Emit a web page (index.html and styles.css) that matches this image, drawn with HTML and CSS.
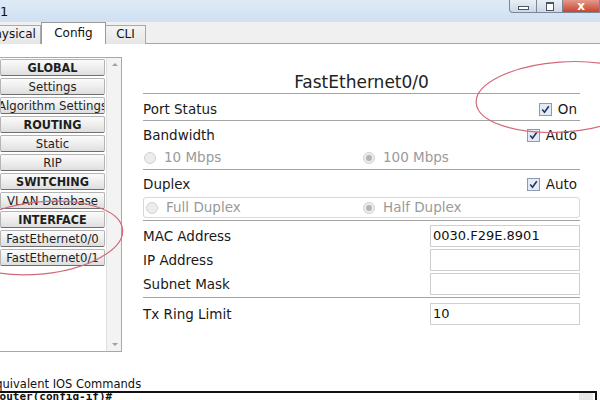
FILE: index.html
```html
<!DOCTYPE html>
<html>
<head>
<meta charset="utf-8">
<link rel="stylesheet" href="styles.css">
</head>
<body>
<div class="window">
  <div class="titlebar">
    <span class="title">R1</span>
    <div class="winbtns">
      <span class="wb wb-min"><span class="glyph-min"></span></span>
      <span class="wb wb-max"><span class="glyph-max"></span></span>
      <span class="wb wb-close">x</span>
    </div>
  </div>
  <div class="tabs">
    <span class="tab tab-first">Physical</span>
    <span class="tab tab-active">Config</span>
    <span class="tab">CLI</span>
  </div>
  <div class="main">
    <div class="listbox">
      <div class="items">
        <div class="item head">GLOBAL</div>
        <div class="item">Settings</div>
        <div class="item">Algorithm Settings</div>
        <div class="item head">ROUTING</div>
        <div class="item">Static</div>
        <div class="item">RIP</div>
        <div class="item head">SWITCHING</div>
        <div class="item">VLAN Database</div>
        <div class="item head">INTERFACE</div>
        <div class="item">FastEthernet0/0</div>
        <div class="item">FastEthernet0/1</div>
      </div>
      <div class="scrollbar">
        <span class="arrow arrow-up"></span>
        <span class="arrow arrow-down"></span>
      </div>
    </div>
    <div class="panel">
      <div class="ptitle">FastEthernet0/0</div>
      <div class="sec sec-port">
        <div class="line">
          <span class="lbl">Port Status</span>
          <span class="chk"><svg class="cb" viewBox="0 0 13 13"><rect x="0.5" y="0.5" width="12" height="12" fill="#e4ebf5" stroke="#8a9ab5"/><path d="M3.2 6.6 L5.5 9.3 L9.8 3.2" fill="none" stroke="#23356b" stroke-width="1.6"/></svg>On</span>
        </div>
      </div>
      <div class="sec sec-bw">
        <div class="line">
          <span class="lbl">Bandwidth</span>
          <span class="chk"><svg class="cb" viewBox="0 0 13 13"><rect x="0.5" y="0.5" width="12" height="12" fill="#e4ebf5" stroke="#8a9ab5"/><path d="M3.2 6.6 L5.5 9.3 L9.8 3.2" fill="none" stroke="#23356b" stroke-width="1.6"/></svg>Auto</span>
        </div>
        <div class="radios">
          <span class="rad"><span class="rb"></span>10 Mbps</span>
          <span class="rad"><span class="rb rb-on"></span>100 Mbps</span>
        </div>
      </div>
      <div class="sec sec-dup">
        <div class="line">
          <span class="lbl">Duplex</span>
          <span class="chk"><svg class="cb" viewBox="0 0 13 13"><rect x="0.5" y="0.5" width="12" height="12" fill="#e4ebf5" stroke="#8a9ab5"/><path d="M3.2 6.6 L5.5 9.3 L9.8 3.2" fill="none" stroke="#23356b" stroke-width="1.6"/></svg>Auto</span>
        </div>
        <div class="radios box">
          <span class="rad"><span class="rb"></span>Full Duplex</span>
          <span class="rad"><span class="rb rb-on"></span>Half Duplex</span>
        </div>
      </div>
      <div class="sec sec-addr">
        <div class="frow"><span class="lbl">MAC Address</span><span class="inp">0030.F29E.8901</span></div>
        <div class="frow"><span class="lbl">IP Address</span><span class="inp"></span></div>
        <div class="frow"><span class="lbl">Subnet Mask</span><span class="inp"></span></div>
      </div>
      <div class="sec sec-tx">
        <div class="frow"><span class="lbl">Tx Ring Limit</span><span class="inp">10</span></div>
      </div>
    </div>
  </div>
  <div class="ios">Equivalent IOS Commands</div>
  <div class="cli"><span class="cli-text">Router(config-if)#</span><span class="cli-scroll"></span></div>
  <svg class="annot" viewBox="0 0 600 400" width="600" height="400">
    <ellipse cx="562" cy="97" rx="86" ry="35" transform="rotate(-4 562 97)" fill="none" stroke="#d2697a" stroke-width="1.2"/>
    <ellipse cx="40" cy="238" rx="83" ry="36" transform="rotate(-6 40 238)" fill="none" stroke="#d2697a" stroke-width="1.2"/>
  </svg>
</div>
</body>
</html>
```

FILE: styles.css
```css
html, body {
  margin: 0;
  padding: 0;
}
body {
  width: 600px;
  height: 400px;
  overflow: hidden;
  background: #fff;
  font-family: "DejaVu Sans", sans-serif;
  color: #1a1a1a;
}
.window {
  position: relative;
  width: 600px;
  height: 400px;
  overflow: hidden;
  display: flex;
  flex-direction: column;
}
.titlebar {
  height: 22px;
  flex: none;
  display: flex;
  align-items: flex-start;
  background: linear-gradient(to bottom, #dfeaf6 0%, #cfe0f2 100%);
}
.title {
  margin-left: -9px;
  margin-top: 4px;
  font-size: 13px;
  line-height: 15px;
  color: #111;
}
.winbtns {
  margin-left: auto;
  display: flex;
  height: 13px;
}
.wb {
  display: flex;
  align-items: center;
  justify-content: center;
  height: 12px;
  border: 1px solid #7b8796;
  border-top: none;
  background: linear-gradient(to bottom, #e9eff6, #ccd8e6);
  box-sizing: content-box;
}
.wb-min {
  width: 26px;
  border-radius: 0 0 0 4px;
}
.wb-max {
  width: 25px;
  border-left: none;
}
.wb-close {
  width: 36px;
  border-left: none;
  background: linear-gradient(to bottom, #e49a8c, #c8442e);
  color: #fff;
  font-weight: bold;
  font-size: 12px;
  line-height: 12px;
}
.glyph-min {
  width: 9px;
  height: 2px;
  border: 1px solid #4a5566;
  background: #fff;
  margin-top: 3px;
}
.glyph-max {
  width: 6px;
  height: 6px;
  border: 1px solid #4a5566;
  border-top-width: 2px;
  background: #fff;
}
.tabs {
  height: 22px;
  flex: none;
  display: flex;
  align-items: flex-end;
  background: #f0f0f0;
  border-bottom: 1px solid #a5a5a5;
  box-sizing: border-box;
}
.tab {
  box-sizing: border-box;
  border: 1px solid #a9a9a9;
  border-bottom: none;
  background: linear-gradient(to bottom, #f4f4f4, #e6e6e6);
  font-size: 12px;
  line-height: 17px;
  padding: 0 8px;
  color: #111;
  margin-bottom: -1px;
  height: 19px;
}
.tab-first {
  margin-left: -22px;
  width: 63px;
  text-align: center;
}
.tab-active {
  height: 22px;
  width: 65px;
  background: #fff;
  line-height: 20px;
  text-align: center;
  border-color: #9a9a9a;
}
.tab:last-child {
  width: 40px;
  text-align: center;
  border-left: none;
}
.main {
  flex: none;
  display: flex;
  margin-top: 13px;
}
.listbox {
  width: 123px;
  height: 295px;
  margin-left: -1px;
  box-sizing: border-box;
  border: 1px solid #a8a8a8;
  display: flex;
  flex: none;
}
.items {
  width: 105px;
  padding-top: 1px;
  display: flex;
  flex-direction: column;
  gap: 2px;
}
.item {
  height: 17px;
  box-sizing: border-box;
  display: flex;
  align-items: center;
  justify-content: center;
  white-space: nowrap;
  overflow: hidden;
  border: 1px solid #b4b4b4;
  border-bottom-color: #6e6e6e;
  border-radius: 2px;
  background: linear-gradient(to bottom, #fbfbfb 0%, #eeeeee 50%, #dedede 100%);
  font-family: "DejaVu Sans Condensed", "DejaVu Sans", sans-serif;
  font-size: 13px;
  color: #1e1e1e;
}
.item.head {
  font-weight: bold;
  font-size: 12.5px;
}
.scrollbar {
  flex: 1;
  margin-left: 1px;
  background: #f3f3f3;
  border-left: 1px solid #e0e0e0;
  position: relative;
}
.arrow {
  position: absolute;
  left: 5px;
  width: 0;
  height: 0;
  border-left: 3px solid transparent;
  border-right: 3px solid transparent;
}
.arrow-up {
  top: 5px;
  border-bottom: 3px solid #a0a0a0;
}
.arrow-down {
  bottom: 5px;
  border-top: 3px solid #a0a0a0;
}
.panel {
  margin-left: 21px;
  width: 437px;
  display: flex;
  flex-direction: column;
  font-size: 13.5px;
}
.ptitle {
  padding-top: 14px;
  font-size: 17px;
  line-height: 22px;
  text-align: center;
  border-bottom: 1px solid #a4a4a4;
  color: #222;
}
.sec {
  border-bottom: 1px solid #a4a4a4;
}
.line {
  display: flex;
  align-items: center;
  height: 17px;
  line-height: 17px;
}
.lbl {
  line-height: 17px;
}
.chk {
  margin-left: auto;
  display: flex;
  align-items: center;
  gap: 6px;
  margin-right: 3px;
}
.cb {
  width: 13px;
  height: 13px;
  display: block;
}
.sec-port {
  padding: 7px 0 2px;
}
.sec-bw {
  padding: 6px 0 3px;
}
.sec-bw .radios {
  margin-top: 5px;
}
.radios {
  display: grid;
  grid-template-columns: 219px 1fr;
  height: 17px;
  align-items: center;
  color: #9a9a9a;
}
.rad {
  display: flex;
  align-items: center;
  gap: 8px;
  line-height: 17px;
}
.rb {
  width: 10px;
  height: 10px;
  border-radius: 50%;
  border: 1px solid #d2d2d2;
  background: #ececec;
  margin-left: 1px;
  position: relative;
}
.rb-on::after {
  content: "";
  position: absolute;
  left: 2px;
  top: 2px;
  width: 6px;
  height: 6px;
  border-radius: 50%;
  background: #b4b4b4;
}
.sec-dup {
  padding: 6px 0 2px;
}
.box {
  margin-top: 4px;
  height: 21px;
  box-sizing: border-box;
  border: 1px solid #d8d8d8;
  border-radius: 3px;
  padding-left: 1px;
  grid-template-columns: 217px 1fr;
}
.sec-addr {
  padding: 4px 0 2px;
  display: flex;
  flex-direction: column;
  gap: 2px;
}
.sec-tx {
  border-bottom: none;
  padding-top: 5px;
}
.frow {
  display: flex;
  align-items: center;
  justify-content: space-between;
  height: 22px;
}
.inp {
  width: 150px;
  height: 22px;
  box-sizing: border-box;
  border: 1px solid #cfcfcf;
  font-size: 13px;
  line-height: 20px;
  padding-left: 2px;
  color: #111;
}
.ios {
  margin-top: auto;
  margin-left: -12px;
  font-size: 11.5px;
  line-height: 13px;
  color: #111;
  margin-bottom: 0;
}
.cli {
  height: 7px;
  border-top: 2px solid #111;
  border-right: 2px solid #111;
  margin-right: 3px;
  display: flex;
  overflow: hidden;
  background: #fff;
}
.cli-text {
  margin-left: -7px;
  font-family: "DejaVu Sans Mono", monospace;
  font-weight: bold;
  font-size: 11px;
  line-height: 7px;
  color: #111;
}
.cli-scroll {
  margin-left: auto;
  width: 14px;
  background: #e6e6e6;
  margin-right: 2px;
}
.annot {
  position: absolute;
  left: 0;
  top: 0;
  pointer-events: none;
}
```
